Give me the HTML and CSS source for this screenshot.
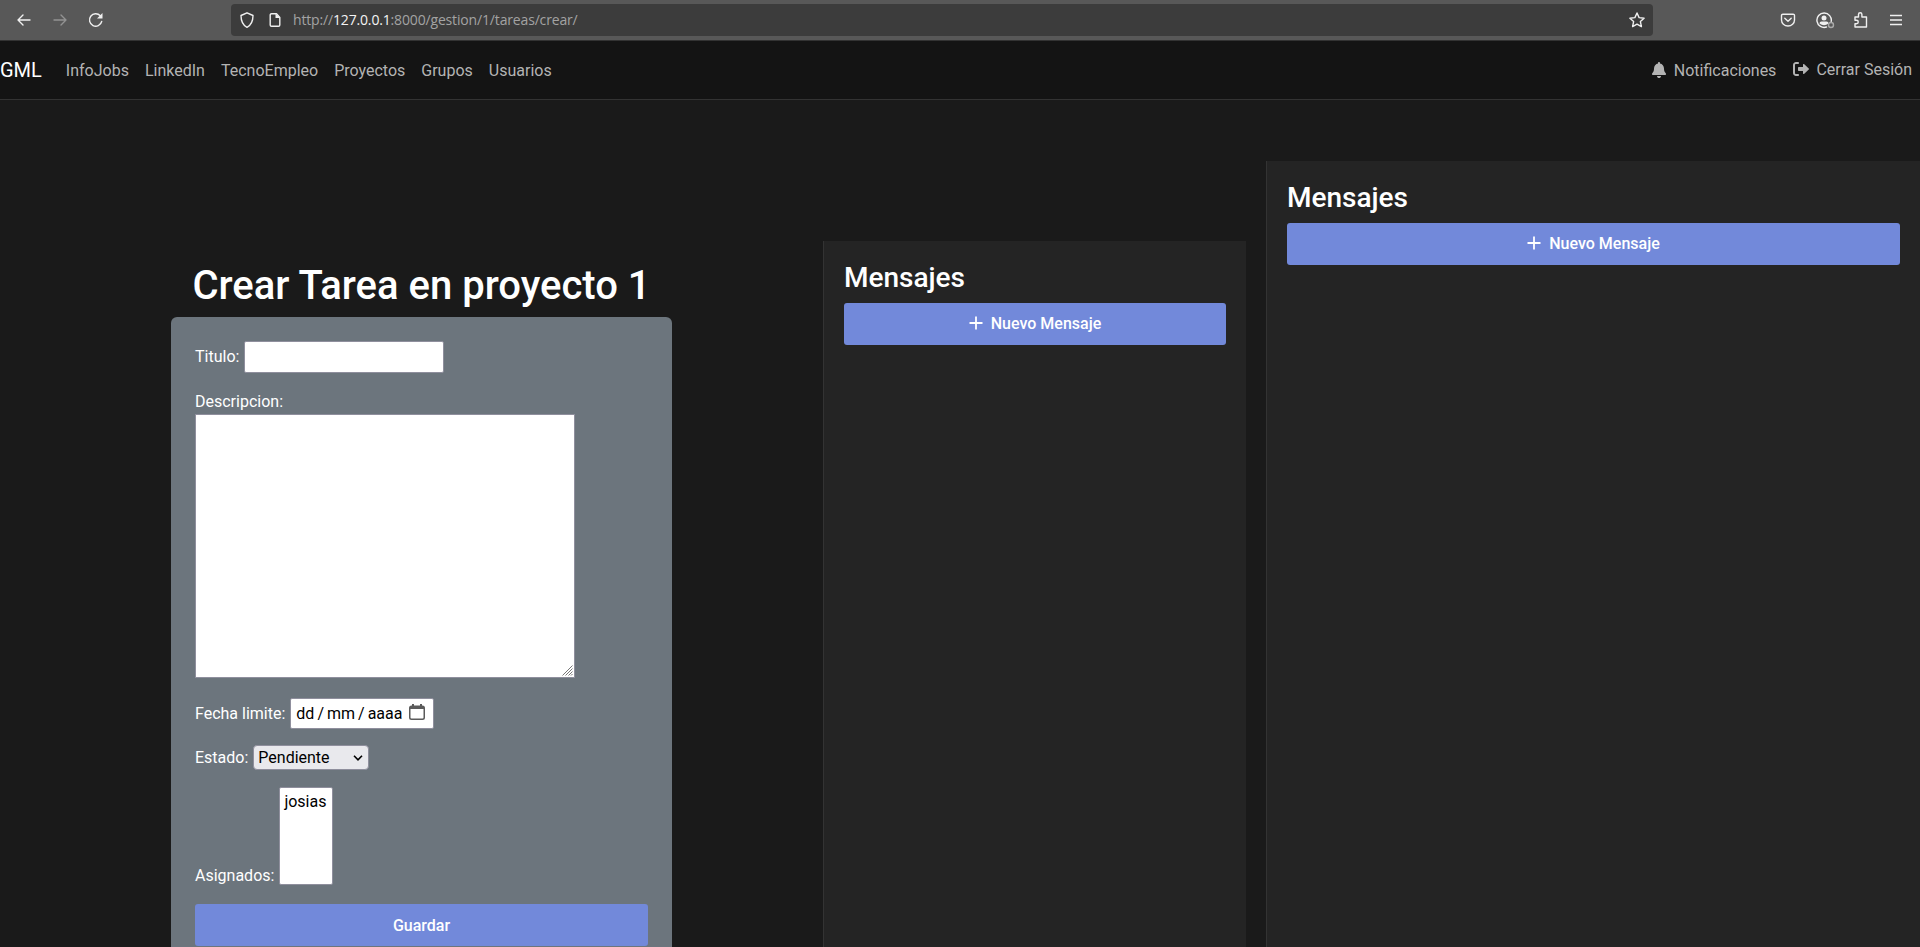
FILE: index.html
```html
<!DOCTYPE html>
<html lang="es">
<head>
<meta charset="utf-8">
<title>Crear Tarea</title>
<link rel="stylesheet" href="styles.css">
</head>
<body>
<div class="toolbar">
  <div class="history">
    <svg class="icon" width="16" height="16" viewBox="0 0 16 16"><path d="M14 8H2M7 3 2 8l5 5"/></svg>
    <svg class="icon dim" width="16" height="16" viewBox="0 0 16 16"><path d="M2 8h12M9 3l5 5-5 5"/></svg>
    <svg class="icon" width="16" height="16" viewBox="0 0 16 16"><path d="M12.300 3.800A6.200 6.200 0 1 0 13.700 9.500"/><path class="solid" d="M14.500 1v5.500H9z"/></svg>
  </div>
  <div class="urlbar">
    <svg class="icon" width="16" height="16" viewBox="0 0 16 16"><path d="M8 .8 14 3.500C14 9 12.500 13 8 15.300 3.500 13 2 9 2 3.500z"/></svg>
    <svg class="icon page" width="16" height="16" viewBox="0 0 16 16"><path d="M9.500 1.700H4.500A1.300 1.300 0 0 0 3.200 3v10A1.300 1.300 0 0 0 4.500 14.300h7a1.300 1.300 0 0 0 1.300-1.300V5.500z"/><path class="solid" d="M8.500 1.500V6H13z"/></svg>
    <span class="url">http://<b>127.0.0.1</b>:8000/gestion/1/tareas/crear/</span>
    <svg class="icon star" width="16" height="16" viewBox="0 0 16 16"><path d="m8 1 2.100 4.600 5 .6-3.700 3.400 1 5L8 12.100l-4.400 2.500 1-5L.9 6.200l5-.6z"/></svg>
  </div>
  <div class="actions">
    <svg class="icon" width="16" height="16" viewBox="0 0 16 16"><path d="M2.800 2.200h10.400a1.300 1.300 0 0 1 1.300 1.300V8a6.500 6 0 0 1-13 0V3.500a1.300 1.300 0 0 1 1.300-1.300zM4.800 6.200 8 9.200l3.200-3"/></svg>
    <svg class="icon account" width="19" height="17" viewBox="0 0 19 17"><path d="M10.500 15A7.200 7.200 0 1 1 15.200 9.500"/><circle class="solid" cx="8" cy="6" r="2.500"/><path class="solid" d="M3.500 11.500Q3.500 9.500 5.500 9.500h5q2 0 2 2Q8 15 3.500 11.500z"/><circle class="badge" cx="15" cy="13" r="2.500"/></svg>
    <svg class="icon" width="16" height="16" viewBox="0 0 16 16"><path d="M2 5h3.500V2.500a1.700 1.700 0 0 1 3.400 0V5H13.500v10H2v-3.300h1.500a1.700 1.700 0 0 0 0-3.500H2z"/></svg>
    <svg class="icon menu" width="16" height="16" viewBox="0 0 16 16"><path d="M2 3.500h12M2 8h12M2 12.500h12"/></svg>
  </div>
</div>
<nav class="navbar">
  <a class="brand">GML</a>
  <a>InfoJobs</a><a>LinkedIn</a><a>TecnoEmpleo</a><a>Proyectos</a><a>Grupos</a><a>Usuarios</a>
  <a class="notify"><svg width="14" height="16" viewBox="0 0 448 512"><path d="M224 0c-17.700 0-32 14.300-32 32v19.200C119 66 64 130.600 64 208v18.800c0 47-17.300 92.400-48.500 127.600l-7.400 8.300c-8.400 9.400-10.400 22.900-5.300 34.400S19.400 416 32 416h384c12.600 0 24-7.400 29.200-18.900s3.100-25-5.300-34.400l-7.400-8.300C401.300 319.200 384 273.900 384 226.800V208c0-77.400-55-142-128-156.800V32c0-17.700-14.300-32-32-32zm45.300 493.300c12-12 18.700-28.300 18.700-45.300H160c0 17 6.700 33.300 18.700 45.300s28.300 18.700 45.300 18.700 33.300-6.700 45.300-18.700z"/></svg>Notificaciones</a>
  <a class="logout"><svg width="16" height="16" viewBox="0 0 512 512"><path d="M160 96c17.700 0 32-14.300 32-32s-14.300-32-32-32H96C43 32 0 75 0 128v256c0 53 43 96 96 96h64c17.700 0 32-14.300 32-32s-14.300-32-32-32H96c-17.700 0-32-14.300-32-32V128c0-17.700 14.300-32 32-32h64zM504.500 273.400c4.800-4.500 7.500-10.800 7.500-17.400s-2.700-12.900-7.500-17.400l-144-136c-7-6.600-17.200-8.400-26-4.600S320 110.400 320 120v72H192c-17.700 0-32 14.300-32 32v64c0 17.700 14.300 32 32 32h128v72c0 9.600 5.700 18.200 14.500 22s19 2 26-4.600l144-136z"/></svg>Cerrar Sesión</a>
</nav>
<main class="layout">
  <section class="task">
    <h1>Crear Tarea en proyecto 1</h1>
    <form class="card">
      <div class="field title"><label>Titulo:</label><input class="box text" type="text"></div>
      <div class="field description"><label>Descripcion:</label>
        <div class="box area"><svg width="11" height="11" viewBox="0 0 11 11"><path d="M.5 10.500l10-10M3.500 10.500l7-7M6.500 10.500l4-4M9 10.500l1.500-1.500"/></svg></div>
      </div>
      <div class="field due"><label>Fecha limite:</label>
        <div class="box date"><span>dd</span><i>/</i><span>mm</span><i>/</i><span>aaaa</span><svg width="16" height="16" viewBox="0 0 16 16"><path d="M3 0h2v1.500h6V0h2v1.500h.500A2.500 2.500 0 0 1 16 4v9.500a2.500 2.500 0 0 1-2.500 2.500h-11A2.500 2.500 0 0 1 0 13.500V4a2.500 2.500 0 0 1 2.500-2.500H3zM1.500 5v8.500q0 1 1 1h11q1 0 1-1V5z" fill-rule="evenodd"/></svg></div>
      </div>
      <div class="field state"><label>Estado:</label>
        <div class="box select">Pendiente<svg width="10" height="6" viewBox="0 0 10 6"><path d="m1 .8 4 4 4-4"/></svg></div>
      </div>
      <div class="field people"><label>Asignados:</label><div class="box list">josias</div></div>
      <button class="btn" type="button">Guardar</button>
    </form>
  </section>
  <aside class="panel inner">
    <h2>Mensajes</h2>
    <button class="btn" type="button"><svg width="14" height="14" viewBox="0 0 14 14"><path d="M7 .5v13M.5 7h13"/></svg>Nuevo Mensaje</button>
  </aside>
  <aside class="panel outer">
    <h2>Mensajes</h2>
    <button class="btn" type="button"><svg width="14" height="14" viewBox="0 0 14 14"><path d="M7 .5v13M.5 7h13"/></svg>Nuevo Mensaje</button>
  </aside>
</main>
</body>
</html>
```
FILE: styles.css
```css
* { box-sizing: border-box; }
body {
  margin: 0;
  height: 947px;
  overflow: hidden;
  display: flex;
  flex-direction: column;
  background: #1a1a1a;
  color: #fff;
  font: 16px/24px Roboto, sans-serif;
}
svg { flex: none; display: block; }
.toolbar {
  flex: none;
  display: flex;
  align-items: center;
  height: 41px;
  background: #585858;
  border-bottom: 1px solid #333;
}
.icon { fill: none; stroke: #f0f0f0; stroke-width: 1.4; stroke-linejoin: round; stroke-linecap: round; }
.icon .solid { fill: #f0f0f0; stroke: none; }
.icon .badge { stroke: #aaa; }
.icon.dim { stroke: #929292; }
.history { display: flex; gap: 20px; width: 231px; padding-left: 16px; }
.urlbar {
  display: flex;
  align-items: center;
  width: 1422px;
  height: 32px;
  padding: 0 8px;
  border-radius: 4px;
  background: #3c3c3c;
}
.page { margin-left: 12px; }
.url { margin-left: 10px; color: #a3a3a3; font: 14px/20px "Open Sans", sans-serif; white-space: nowrap; letter-spacing: -.16px; }
.url b { color: #f4f4f4; font-weight: 400; }
.star { margin-left: auto; }
.actions { display: flex; align-items: center; gap: 20px; padding-left: 127px; }
.account { margin-right: -2px; }
.menu { stroke-linecap: butt; margin-left: -1px; }

.navbar {
  flex: none;
  display: flex;
  align-items: center;
  height: 59px;
  background: #141414;
  border-bottom: 1px solid #333;
}
.navbar a { padding: 2px 8px 0; color: #b3b3b3; white-space: nowrap; }
.navbar .brand { color: #fff; font-size: 20px; padding: 0 0 1px; margin-right: 16px; }
.navbar svg { fill: #b3b3b3; margin-top: -2px; }
.navbar .notify, .navbar .logout { display: flex; align-items: center; gap: 8px; }
.navbar .notify { margin-left: auto; }
.navbar .logout { padding-top: 0; gap: 7px; }
.navbar .logout svg { margin-left: 1px; }

.layout { flex: 1; min-height: 0; display: flex; align-items: stretch; }
.task { width: 501px; margin: 160px 151px 0 171px; display: flex; flex-direction: column; }
h1, h2 { margin: 0; font-weight: 500; }
h1 { font-size: 40px; line-height: 48px; text-align: center; margin: 2px 0 7px; }
.card {
  flex: 1;
  min-height: 0;
  padding: 24px 24px 0;
  border-radius: 6px 6px 0 0;
  background: #6c757d;
}
.field { display: flex; gap: 5px; }
.box { background: #fff; border: 1px solid #8f8f9d; border-radius: 2px; color: #000; font: 16px/24px Roboto, sans-serif; }
.title { align-items: center; height: 32px; }
.text { width: 200px; height: 32px; }
.description { flex-direction: column; gap: 0; margin-top: 17px; }
.area { width: 380px; height: 264px; border-radius: 0; display: flex; align-items: flex-end; justify-content: flex-end; padding: 1px; }
.area svg { stroke: #777; fill: none; }
.due { align-items: center; margin-top: 20px; height: 31px; }
.date { display: flex; align-items: center; width: 144px; height: 31px; padding-left: 5px; }
.date i { font-style: normal; margin: 0 3px; }
.date svg { fill: #5b5b5b; margin: -3px 0 0 7px; }
.state { align-items: center; margin-top: 16px; height: 25px; }
.select { display: flex; align-items: center; justify-content: space-between; width: 116px; height: 25px; padding: 0 5px 0 4px; background: #e9e9ed; border-radius: 4px; }
.select svg { fill: none; stroke: #000; stroke-width: 1.6; }
.people { align-items: flex-end; margin-top: 17px; height: 98px; }
.people label { margin-bottom: -3px; }
.list { width: 54px; height: 98px; padding: 2px 4px; }
.btn {
  display: flex;
  align-items: center;
  justify-content: center;
  gap: 8px;
  width: 100%;
  height: 42px;
  padding: 0;
  border: 0;
  border-radius: 3px;
  background: #7289da;
  color: #fff;
  font: 500 16px/24px Roboto, sans-serif;
}
.btn svg { stroke: #fff; stroke-width: 1.8; margin-top: -2px; }
.card .btn { margin-top: 19px; padding-top: 1px; }
.panel { padding: 20px; background: #242424; border-left: 1px solid #333; }
.panel h2 { font-size: 28px; line-height: 34px; margin-bottom: 8px; }
.inner { width: 423px; margin-top: 141px; }
.outer { flex: 1; margin: 61px 0 0 20px; }
```
